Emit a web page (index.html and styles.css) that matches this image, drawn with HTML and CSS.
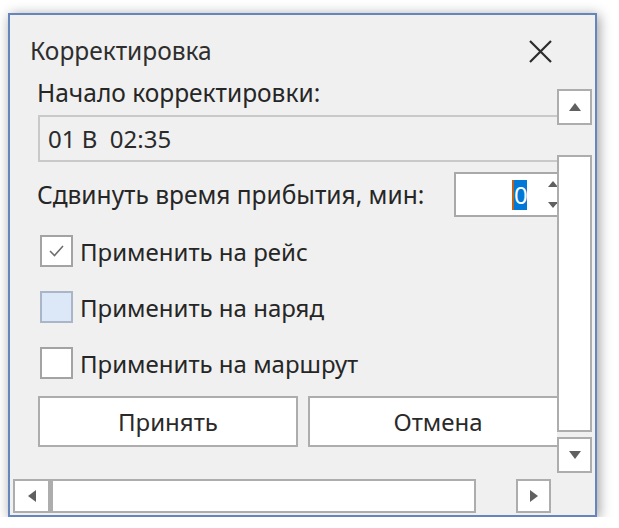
FILE: index.html
```html
<!DOCTYPE html>
<html lang="ru">
<head>
    <meta charset="UTF-8">
    <title>Корректировка</title>
    <link rel="stylesheet" href="styles.css">
</head>
<body>
    <div class="window">
        <div class="title-bar">
            <span class="title">Корректировка</span>
            <svg class="close" width="25" height="25" viewBox="0 0 25 25">
                <path d="M2 2 L23 23 M23 2 L2 23" stroke="#2b2b2b" stroke-width="2.2" fill="none"/>
            </svg>
        </div>
        <div class="panel">
            <div class="content">
                <div class="label">Начало корректировки:</div>
                <div class="field">01 В  02:35</div>
                <div class="shift-row">
                    <span class="label shift-label">Сдвинуть время прибытия, мин:</span>
                    <div class="spin">
                        <span class="value">0</span>
                        <div class="spin-arrows">
                            <span class="tri tri-up small"></span>
                            <span class="tri tri-down small"></span>
                        </div>
                    </div>
                </div>
                <div class="check-row">
                    <span class="check checked">
                        <svg width="17" height="14" viewBox="0 0 17 14">
                            <path d="M2 7 L6.5 11.5 L15 2" stroke="#6e6e6e" stroke-width="1.6" fill="none"/>
                        </svg>
                    </span>
                    <span class="label check-label">Применить на рейс</span>
                </div>
                <div class="check-row">
                    <span class="check hover"></span>
                    <span class="label check-label">Применить на наряд</span>
                </div>
                <div class="check-row">
                    <span class="check"></span>
                    <span class="label check-label">Применить на маршрут</span>
                </div>
                <div class="buttons">
                    <button class="btn">Принять</button>
                    <button class="btn">Отмена</button>
                </div>
            </div>
            <div class="vscroll">
                <div class="sb-btn"><span class="tri tri-up"></span></div>
                <div class="sb-thumb v-thumb"></div>
                <div class="sb-btn down"><span class="tri tri-down"></span></div>
            </div>
        </div>
        <div class="hscroll">
            <div class="sb-btn h-btn"><span class="tri tri-left"></span></div>
            <div class="sb-thumb h-thumb"></div>
            <div class="sb-btn h-btn right"><span class="tri tri-right"></span></div>
        </div>
    </div>
</body>
</html>
```

FILE: styles.css
```css
body {
    margin: 0;
    padding: 13px 0 0 8px;
    background-color: #ffffff;
    font-family: 'Noto Sans', 'Open Sans', Arial, sans-serif;
    color: #1f1f1f;
}
.window {
    width: 585px;
    height: 500px;
    border: 2px solid #6585bd;
    background-color: #f0f0f0;
    box-shadow: 2px 2px 12px rgba(0, 0, 0, 0.4);
    display: flex;
    flex-direction: column;
}
.title-bar {
    height: 60px;
    box-sizing: border-box;
    padding: 21px 42px 0 20px;
    display: flex;
    justify-content: space-between;
    align-items: flex-start;
}
.title {
    font-size: 24.5px;
    line-height: 30px;
    color: #2e2e2e;
}
.close {
    margin-top: 3px;
}
.panel {
    height: 404px;
    display: flex;
    padding-right: 3px;
}
.content {
    width: 547px;
    overflow: hidden;
    padding: 1px 0 0 27px;
    box-sizing: border-box;
}
.label {
    font-size: 24.5px;
    line-height: 33px;
    white-space: nowrap;
    color: #262626;
}
.check-label {
    font-size: 24px;
    margin-left: -2px;
}
.field {
    margin: 6px 0 0 1px;
    width: 530px;
    height: 47px;
    box-sizing: border-box;
    border: 2px solid #c9c9c9;
    padding-left: 8px;
    font-size: 24px;
    line-height: 43px;
    white-space: pre;
    color: #2a2a2a;
}
.shift-row {
    margin-top: 10px;
    display: flex;
    align-items: center;
    height: 45px;
}
.shift-label {
    flex: 0 0 417px;
}
.spin {
    width: 114px;
    height: 45px;
    box-sizing: border-box;
    flex-shrink: 0;
    border: 2px solid #a9a9a9;
    background-color: #ffffff;
    display: flex;
    align-items: center;
    justify-content: flex-end;
}
.value {
    font-size: 24px;
    line-height: 30px;
    width: 13px;
    text-align: center;
    background-color: #0078d7;
    color: #ffffff;
    border-left: 2px solid #c0621c;
    margin-right: 20px;
}
.spin-arrows {
    width: 12px;
    height: 100%;
    display: flex;
    flex-direction: column;
    justify-content: space-around;
    align-items: center;
    margin-right: 7px;
}
.check-row {
    margin-top: 18px;
    display: flex;
    align-items: center;
    height: 32px;
}
.check-row + .check-row {
    margin-top: 24px;
}
.check {
    margin-left: 3px;
    width: 33px;
    height: 32px;
    box-sizing: border-box;
    border: 2px solid #a3a3a3;
    background-color: #ffffff;
    display: flex;
    align-items: center;
    justify-content: center;
    margin-right: 9px;
}
.check.hover {
    background-color: #dce8f8;
    border-color: #a9b6c8;
}
.buttons {
    margin: 17px 0 0 1px;
    display: flex;
    gap: 10px;
}
.btn {
    width: 260px;
    height: 51px;
    flex-shrink: 0;
    border: 2px solid #adadad;
    background-color: #ffffff;
    font-family: inherit;
    font-size: 24px;
    color: #2a2a2a;
    padding: 0;
}
.vscroll {
    width: 35px;
    display: flex;
    flex-direction: column;
}
.sb-btn {
    height: 36px;
    box-sizing: border-box;
    border: 2px solid #adadad;
    background-color: #ffffff;
    display: flex;
    align-items: center;
    justify-content: center;
}
.vscroll .sb-btn {
    margin-top: 14px;
}
.vscroll .sb-btn.down {
    margin-top: 5px;
    margin-bottom: 6px;
}
.sb-thumb {
    box-sizing: border-box;
    border: 2px solid #adadad;
    background-color: #ffffff;
}
.v-thumb {
    margin-top: 30px;
    flex: 1;
}
.hscroll {
    height: 34px;
    display: flex;
    padding-left: 3px;
}
.h-btn {
    width: 37px;
    height: 34px;
}
.h-btn.right {
    width: 35px;
    margin-left: 40px;
}
.h-thumb {
    width: 426px;
    height: 34px;
    border-left-width: 3px;
}
.tri {
    width: 0;
    height: 0;
    border-style: solid;
    border-color: transparent;
}
.tri-up {
    border-width: 0 6px 8px 6px;
    border-bottom-color: #606060;
}
.tri-down {
    border-width: 8px 6px 0 6px;
    border-top-color: #606060;
}
.tri-left {
    border-width: 6px 8px 6px 0;
    border-right-color: #606060;
}
.tri-right {
    border-width: 6px 0 6px 8px;
    border-left-color: #606060;
}
.tri.small {
    border-width: 0 5px 6px 5px;
}
.tri-down.small {
    border-width: 6px 5px 0 5px;
}
```
